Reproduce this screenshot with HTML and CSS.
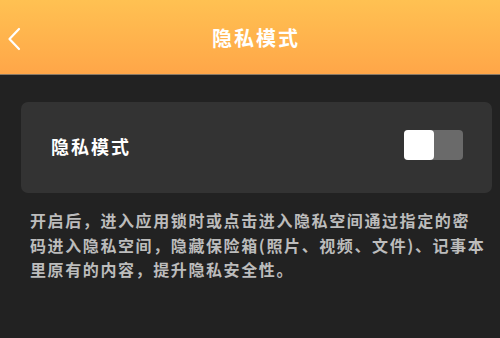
FILE: index.html
```html
<!DOCTYPE html>
<html lang="zh-CN">
<head>
<meta charset="utf-8">
<title>隐私模式</title>
<link rel="stylesheet" href="styles.css">
</head>
<body>
<header class="topbar">
  <button class="back" aria-label="返回">
    <svg width="14" height="24" viewBox="0 0 14 24"><path d="M12 2 L2.5 12 L12 22" fill="none" stroke="#fff" stroke-width="2.2" stroke-linecap="round" stroke-linejoin="round"/></svg>
  </button>
  <h1 class="title">隐私模式</h1>
</header>
<main class="content">
  <section class="card">
    <span class="card-label">隐私模式</span>
    <div class="toggle"><span class="knob"></span></div>
  </section>
  <p class="desc">开启后，进入应用锁时或点击进入隐私空间通过指定的密<br>码进入隐私空间，隐藏保险箱(照片、视频、文件)、记事本<br>里原有的内容，提升隐私安全性。</p>
</main>
</body>
</html>
```
FILE: styles.css
```css
html, body {
  margin: 0;
  padding: 0;
  background: #222222;
  font-family: "Noto Sans CJK SC", "Noto Sans", sans-serif;
}
.topbar {
  position: relative;
  height: 74px;
  background: linear-gradient(180deg, #ffc152 0%, #ffa648 100%);
  border-bottom: 1px solid #8a7a66;
  display: flex;
  align-items: center;
  justify-content: center;
}
.back {
  position: absolute;
  left: 7px;
  top: 27px;
  padding: 0;
  border: 0;
  background: none;
  width: 14px;
  height: 24px;
}
.back svg { display: block; }
.title {
  margin: 0;
  padding-left: 12px;
  color: #ffffff;
  font-size: 20px;
  font-weight: 700;
  letter-spacing: 2px;
}
.content {
  padding: 27px 8px 0 21px;
}
.card {
  height: 91px;
  background: #333333;
  border-radius: 7px;
  display: flex;
  align-items: center;
  justify-content: space-between;
  padding: 0 29px 0 30px;
}
.card-label {
  color: #ffffff;
  font-size: 18px;
  font-weight: 700;
  letter-spacing: 2px;
  margin-top: -3px;
}
.toggle {
  width: 59px;
  height: 30px;
  background: #6a6a6a;
  border-radius: 4px;
  display: flex;
  margin-top: -5px;
}
.knob {
  width: 30px;
  height: 30px;
  background: #ffffff;
  border-radius: 4px;
}
.desc {
  margin: 15px 0 0 9px;
  color: #bcbcbc;
  font-size: 16px;
  font-weight: 700;
  line-height: 24.5px;
  letter-spacing: 1.6px;
  white-space: nowrap;
}
```
